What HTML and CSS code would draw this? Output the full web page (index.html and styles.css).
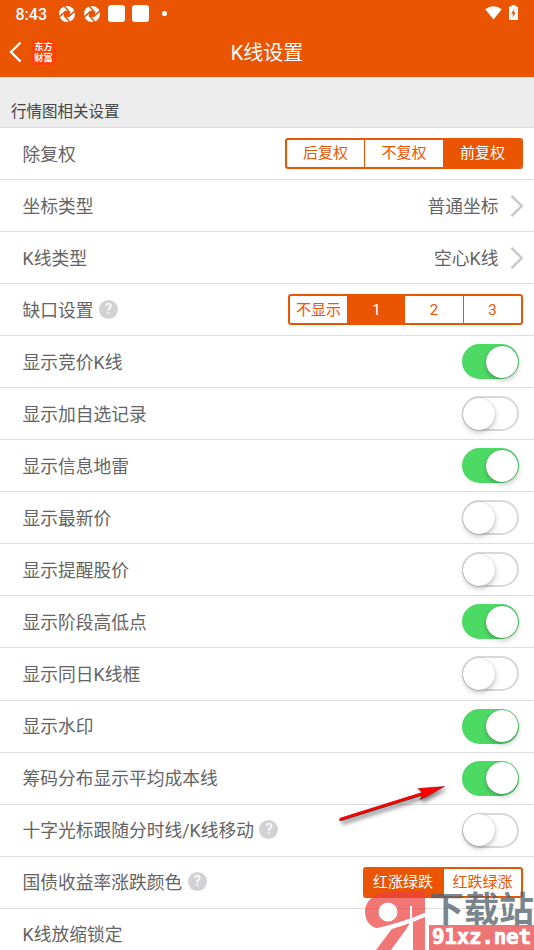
FILE: index.html
```html
<!DOCTYPE html>
<html lang="zh-CN">
<head>
<meta charset="utf-8">
<title>K线设置</title>
<link rel="stylesheet" href="styles.css">
</head>
<body>
<svg class="defs" width="0" height="0">
  <symbol id="swirl" viewBox="0 0 16 16">
    <circle cx="8" cy="8" r="8" fill="#fff"/>
    <g transform="translate(16 0) scale(-1 1) rotate(12 8 8)">
      <circle cx="8" cy="8" r="3.200" fill="#ea5504"/>
      <path d="M4.800 7.500 9-.4M8.500 4.800l8 4.600M11.200 8.500 7 16.400M7.500 11.200-.5 6.600" stroke="#ea5504" stroke-width="1.500" fill="none"/>
    </g>
  </symbol>
  <symbol id="chevron" viewBox="0 0 14 24"><path d="M1.500 1.800 11.700 12 1.500 22.200" fill="none" stroke="#c7c7cc" stroke-width="2.400"/></symbol>
</svg>
<div class="screen">
  <header class="top">
    <div class="status">
      <span class="time">8:43</span>
      <svg class="swirl"><use href="#swirl"/></svg>
      <svg class="swirl"><use href="#swirl"/></svg>
      <i class="square"></i><i class="square"></i><i class="dot"></i>
      <svg class="wifi" viewBox="0 0 17 14"><path d="M.3 3.200Q8.500-2.600 16.700 3.200L8.500 13.600Z" fill="#fff"/></svg>
      <svg class="battery" viewBox="0 0 9 15"><path d="M2.700 0h3.600v1.500H8q1 0 1 1V14q0 1-1 1H1q-1 0-1-1V2.500q0-1 1-1h1.700Z" fill="#fff"/><path d="M5.400 3.700 2.200 8.800h1.900l-.6 3.600 3.300-5H4.900Z" fill="#ea5504"/></svg>
    </div>
    <nav class="bar">
      <svg class="back" viewBox="0 0 13 22"><path d="M11.500 1.500 2 11l9.500 9.500" fill="none" stroke="#fff" stroke-width="2.400"/></svg>
      <div class="brand"><span>东方</span><span>财富</span></div>
      <h1>K线设置</h1>
    </nav>
  </header>
  <h2 class="section">行情图相关设置</h2>
  <main class="list">
    <div class="row"><span>除复权</span><div class="seg adjust"><b>后复权</b><b>不复权</b><b class="on">前复权</b></div></div>
    <div class="row"><span>坐标类型</span><div class="value">普通坐标<svg class="chev"><use href="#chevron"/></svg></div></div>
    <div class="row"><span>K线类型</span><div class="value">空心K线<svg class="chev"><use href="#chevron"/></svg></div></div>
    <div class="row"><span>缺口设置</span><i class="help">?</i><div class="seg gap"><b>不显示</b><b class="on">1</b><b>2</b><b>3</b></div></div>
    <div class="row"><span>显示竞价K线</span><div class="toggle on"></div></div>
    <div class="row"><span>显示加自选记录</span><div class="toggle"></div></div>
    <div class="row"><span>显示信息地雷</span><div class="toggle on"></div></div>
    <div class="row"><span>显示最新价</span><div class="toggle"></div></div>
    <div class="row"><span>显示提醒股价</span><div class="toggle"></div></div>
    <div class="row"><span>显示阶段高低点</span><div class="toggle on"></div></div>
    <div class="row"><span>显示同日K线框</span><div class="toggle"></div></div>
    <div class="row"><span>显示水印</span><div class="toggle on"></div></div>
    <div class="row"><span>筹码分布显示平均成本线</span><div class="toggle on"></div></div>
    <div class="row"><span>十字光标跟随分时线/K线移动</span><i class="help">?</i><div class="toggle"></div></div>
    <div class="row"><span>国债收益率涨跌颜色</span><i class="help">?</i><div class="seg color"><b class="on">红涨绿跌</b><b>红跌绿涨</b></div></div>
    <div class="row"><span>K线放缩锁定</span></div>
  </main>
  <svg class="arrow" viewBox="0 0 120 50">
    <path d="M6 39.500 89 13.500" stroke="#444" stroke-width="3.400" stroke-linecap="round"/>
    <path d="M6 39 89 13" stroke="#f00" stroke-width="2.800" stroke-linecap="round"/>
    <path d="M109.500 6.500 83 8.500l4.200 4.200L85.500 19.800Z" fill="#f00" stroke="#711" stroke-width=".5"/>
  </svg>
  <div class="watermark">
    <svg class="mark" viewBox="0 0 64 58">
      <path d="M25 0C11 0 1 9 1 20c0 10 7 17 17 17 5 0 9-1 12-3L12 58h15L43 36 49 25V58H61V0H43C38 0 32 0 25 0Z"/>
      <circle class="cut" cx="24" cy="20" r="9.500"/>
      <path class="cut" d="M46 14h2v12H46Z"/>
      <path class="cut" d="M9 37Q37 31 63 20L61 25Q38 35 16 40Z"/>
    </svg>
    <div class="site"><span class="name">下载站</span><span class="url">91xz.net</span></div>
  </div>
</div>
</body>
</html>
```
FILE: styles.css
```css
* { box-sizing: border-box; }
body { margin: 0; font-family: Roboto, "Noto Sans CJK SC", sans-serif; }
.defs { position: absolute; }
.screen { position: relative; width: 534px; height: 950px; overflow: hidden; background: #fff; }
.top { height: 77px; background: #ea5504; color: #fff; }
.status { display: flex; align-items: center; height: 27px; padding: 0 15px; }
.time { width: 44px; padding-left: .5px; padding-top: 1px; font-size: 16px; font-weight: 500; }
.swirl { width: 16px; height: 16px; margin-right: 8.500px; }
.square { width: 17px; height: 17px; margin-left: -.5px; margin-right: 8px; border-radius: 3px; background: #fff; }
.dot { width: 5px; height: 5px; margin-left: 4.500px; border-radius: 50%; background: #fff; }
.wifi { width: 17px; height: 14px; margin-left: auto; margin-bottom: 2px; }
.battery { width: 9px; height: 15px; margin: 0 1px 2px 7px; }
.bar { display: grid; grid-template-columns: 34px 24px 1fr 58px; align-items: center; height: 50px; }
.back { width: 13px; height: 22px; margin-left: 9px; }
.brand { display: flex; flex-direction: column; justify-content: center; align-items: center; width: 25px; height: 25px; margin-left: -3px; border-radius: 5px; background: #ff4308; font: 700 9.200px/11px "Noto Sans CJK SC", sans-serif; }
h1 { margin: 2px 0 0; text-align: center; font-size: 20px; font-weight: 400; line-height: 28px; }
.section { display: flex; align-items: flex-end; height: 51px; margin: 0; padding: 0 11px 3px; border-bottom: 1px solid #dcdcdd; background: #ececec; color: #454545; font-size: 15.500px; font-weight: 400; line-height: 24px; }
.row { display: flex; align-items: center; height: 52.060px; padding: 0 11px 0 22.500px; border-bottom: 1px solid #dedee0; color: #646464; font-size: 17.750px; line-height: 26px; white-space: nowrap; }
.row > span { padding-top: 2px; }
.value { display: flex; align-items: center; margin-left: auto; padding-top: 2px; }
.chev { width: 14px; height: 24px; margin: -2px -1px 0 11.500px; }
.help { display: grid; place-items: center; width: 19px; height: 19px; margin: -1px 0 0 5.500px; border-radius: 50%; background: #d2d2d4; color: #fff; font-size: 14.500px; font-style: normal; font-weight: 500; line-height: 20px; }
.seg { display: grid; height: 31px; margin-left: auto; overflow: hidden; border: 2px solid #ea5504; border-radius: 3px; color: #ea5504; font-size: 15px; line-height: 27px; }
.seg b { text-align: center; font-weight: 400; border-left: 1px solid #ea5504; }
.seg b:first-child { border-left: 0; }
.seg .on { background: #ea5504; color: #fff; }
.seg .on + b { border-left: 0; }
.adjust { grid-template-columns: 77px 79px 78px; }
.gap { grid-template-columns: 57px 58px 58px 58px; line-height: 29px; }
.color { grid-template-columns: 79px 77px; }
.color .on { padding-right: 3px; }
.toggle { display: flex; align-items: center; width: 57px; height: 35px; margin: 0 4px 0 auto; border: 2px solid #d7d8dd; border-radius: 18px; background: #fff; }
.toggle::after { content: ""; width: 32px; height: 32px; margin-left: -1px; border-radius: 50%; background: #fff; box-shadow: 0 2px 4px rgba(0,0,0,.2), 0 0 1px rgba(0,0,0,.3), 2px 5px 7px rgba(0,0,0,.05); }
.toggle.on { justify-content: flex-end; border-color: #4cd964; background: #4cd964; }
.toggle.on::after { margin-right: -1px; }
.arrow { position: absolute; left: 335px; top: 780px; width: 120px; height: 50px; fill: none; filter: drop-shadow(2px 3px 2px rgba(0,0,0,.5)); }
.watermark { position: absolute; left: 364px; top: 892px; display: flex; width: 170px; height: 58px; }
.mark { flex: none; width: 64px; height: 58px; fill: rgba(235,65,65,.72); }
.mark .cut { fill: #fff; }
.site { display: flex; flex-direction: column; width: 106px; }
.name { height: 33px; margin-left: 1px; color: rgba(86,99,110,.78); font: 700 35px/30px "Noto Sans CJK SC", sans-serif; white-space: nowrap; }
.url { height: 25px; margin-left: 1px; padding-left: 3px; background: rgba(235,91,91,.84); color: #fff; font: bold 21px/24px "DejaVu Sans Mono", monospace; letter-spacing: -.3px; -webkit-text-stroke: .7px #fff; }
```
